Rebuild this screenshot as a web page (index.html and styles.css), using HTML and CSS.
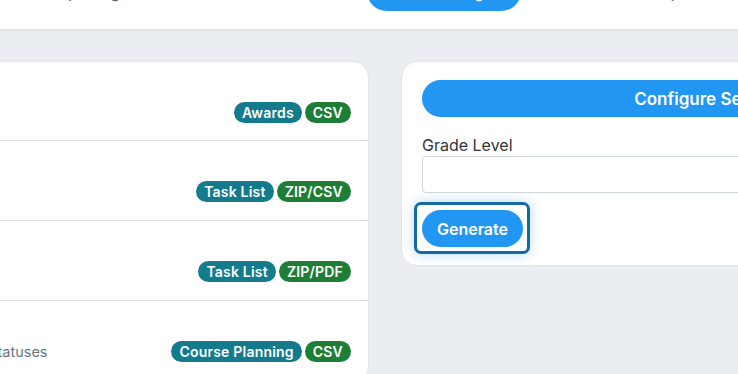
FILE: index.html
```html
<!DOCTYPE html>
<html lang="en">
<head>
  <meta charset="UTF-8" />
  <meta name="viewport" content="width=device-width, initial-scale=1.0" />
  <title>Data Exports</title>
  <link rel="stylesheet" href="styles.css">
</head>
<body>
  <header class="topbar">
    <nav class="tabs">
      <a class="tab tab-first">Reporting</a>
      <a class="tab active">Data Exchange</a>
      <a class="tab tab-last">Help</a>
    </nav>
  </header>

  <main class="layout">
    <section class="card export-list">
      <div class="export-row">
        <div class="export-title">Honor Roll Awards</div>
        <div class="export-meta">
          <span class="export-desc">Awards earned this term</span>
          <span class="badges"><span class="badge badge-type">Awards</span><span class="badge badge-fmt">CSV</span></span>
        </div>
      </div>
      <div class="export-row">
        <div class="export-title">Teacher Task Bundle</div>
        <div class="export-meta">
          <span class="export-desc">Open tasks by teacher</span>
          <span class="badges"><span class="badge badge-type">Task List</span><span class="badge badge-fmt">ZIP/CSV</span></span>
        </div>
      </div>
      <div class="export-row">
        <div class="export-title">Printable Task Sheets</div>
        <div class="export-meta">
          <span class="export-desc">One PDF per class</span>
          <span class="badges"><span class="badge badge-type">Task List</span><span class="badge badge-fmt">ZIP/PDF</span></span>
        </div>
      </div>
      <div class="export-row">
        <div class="export-title">Course Requests</div>
        <div class="export-meta">
          <span class="export-desc">Requested courses with request statuses</span>
          <span class="badges"><span class="badge badge-type">Course Planning</span><span class="badge badge-fmt">CSV</span></span>
        </div>
      </div>
    </section>

    <section class="card config">
      <button class="btn btn-wide">Configure Settings</button>
      <label class="field-label" for="grade">Grade Level</label>
      <input class="field-input" id="grade" type="text" />
      <div class="focus-ring">
        <button class="btn btn-generate">Generate</button>
      </div>
    </section>
  </main>
</body>
</html>
```

FILE: styles.css
```css
/* === Base === */
:root{
  --bg:#eaedf1;
  --fg:#2f3338;
  --muted:#6c757d;
  --primary:#2196f3;
  --ring:#1769a6;
  --line:#dee2e6;
  --teal:#137b8b;
  --green:#1f7e35;
}
body{
  margin:0;
  font-family:Inter,"Open Sans",sans-serif;
  color:var(--fg);
  background:linear-gradient(#e3e6ea,var(--bg) 40px);
  overflow:hidden;
  height:374px;
}

/* === Top bar === */
.topbar{height:29px;background:#fff;box-shadow:0 1px 3px rgba(0,0,0,.08);overflow:hidden;position:relative;z-index:1}
.tabs{display:flex;align-items:flex-end;margin-top:-28px;font-size:15px;font-weight:500;line-height:22px;white-space:nowrap}
.tab{padding:10px 24px 7px;color:#5f6670;border-radius:20px;box-sizing:border-box}
.tab-first{margin-left:26px}
.active{margin-left:223px;width:154px;text-align:center;padding-right:38px;padding-left:18px;background:var(--primary);color:#fff}
.tab-last{margin-left:102px}

/* === Layout === */
.layout{display:flex;align-items:flex-start;gap:32px;padding-top:32px;margin-left:-252px}
.card{background:#fff;border:1px solid #e1e5ea;border-radius:16px;box-sizing:border-box;flex-shrink:0}

/* === Export list === */
.export-list{width:621px}
.export-row{height:80px;box-sizing:border-box;padding:17px 17px 0 16px;border-bottom:1px solid var(--line)}
.export-row:first-child{height:79px}
.export-title{font-size:15px;font-weight:600;line-height:22px}
.export-meta{display:flex;align-items:center;justify-content:space-between;height:22px}
.export-desc{font-size:14.5px;color:var(--muted)}
.badges{display:flex;gap:3px}
.badge{display:inline-block;height:21px;line-height:21px;padding:0 8px;border-radius:11px;color:#fff;font-size:14px;font-weight:600;letter-spacing:.2px}
.badge-type{background:var(--teal)}
.badge-fmt{background:var(--green)}

/* === Config panel === */
.config{width:620px;padding:18px 20px 11px;display:flex;flex-direction:column;align-items:flex-start}
.btn{border:none;background:var(--primary);color:#fff;font-family:inherit;font-weight:600;font-size:16px;border-radius:20px;cursor:pointer}
.btn-wide{width:100%;height:37px;font-size:17px}
.field-label{margin-top:17px;font-size:16px;line-height:22px}
.field-input{width:100%;height:37px;box-sizing:border-box;margin-top:0;border:1px solid #ced4da;border-radius:4px}
.focus-ring{margin:9px 0 0 -8px;padding:5px 4px 4px 5px;border:3px solid var(--ring);border-radius:7px;box-shadow:0 0 12px rgba(33,150,243,.35)}
.btn-generate{display:block;height:37px;padding:0 12px;width:101px}
```
